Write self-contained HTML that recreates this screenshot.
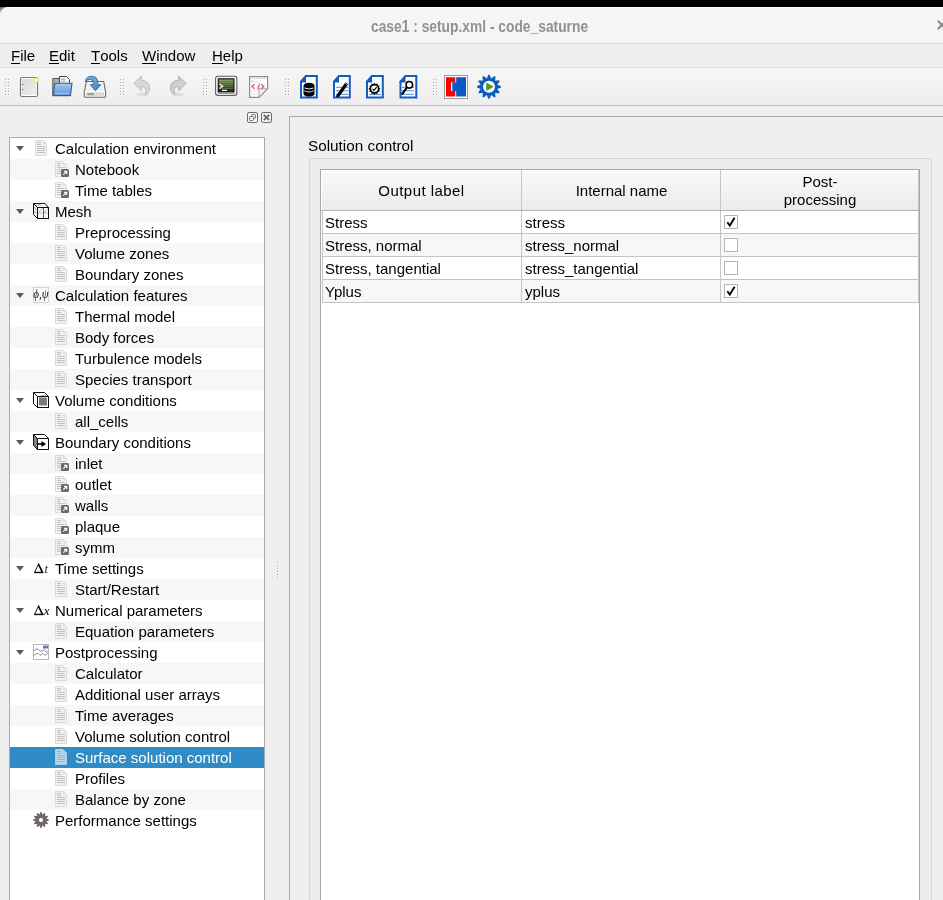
<!DOCTYPE html>
<html><head><meta charset="utf-8">
<style>
*{box-sizing:border-box}
html,body{margin:0;padding:0}
body{width:943px;height:900px;overflow:hidden;position:relative;will-change:transform;background:#efefef;font-family:"Liberation Sans",sans-serif;font-size:15px;color:#000}
.a{position:absolute}
svg{display:block}
#blackbar{left:0;top:0;width:943px;height:8px;background:#000}
#corner{left:0;top:7px;width:8px;height:9px;background:linear-gradient(170deg,#6a6a6a 0%,#a8a8a8 45%,#e0e0e0 100%)}
#title{left:0;top:7px;width:943px;height:37px;background:#f6f5f4;border-top:1px solid #fff;border-bottom:1px solid #d8d4d0;border-top-left-radius:8px}
#ttext{left:371px;top:16.5px;font-weight:bold;color:#8f9292;white-space:nowrap;font-size:15px;transform-origin:0 0;transform:scale(0.92,1.05)}
#menubar{left:0;top:44px;width:943px;height:24px;background:#eeeeee;border-bottom:1px solid #dcdcdc}
.mi{top:0;line-height:23px;white-space:nowrap}
.mi u{text-decoration:none;border-bottom:1px solid #000;display:inline-block;line-height:14px}
#toolbar{left:0;top:68px;width:943px;height:38px;background:linear-gradient(#f6f6f6,#eeeeee);border-bottom:1px solid #bcbcbc}
.dots{width:5px;height:18px;background-image:radial-gradient(circle at 1px 1px,#b5b5b5 0.8px,transparent 1px);background-size:3px 3px}
.vdots{width:3px;height:18px;background-image:radial-gradient(circle at 1px 1px,#a0a0a0 0.8px,transparent 1px);background-size:3px 3px}
#tree{left:9px;top:137px;width:256px;height:800px;background:#fff;border:1px solid #ababab;overflow:hidden}
.row{position:absolute;left:0;width:254px;height:21px;line-height:21px;white-space:nowrap}
.row.alt{background:#f7f7f7}
.row.sel{background:#308cc6;color:#fff}
.row .t{position:absolute;left:45px;top:0}
.row.c .t{left:65px}
.row .ic{position:absolute;left:23px;top:2px;width:16px;height:16px}
.row.c .ic{left:43px}
.arr{position:absolute;left:6px;top:8px;width:0;height:0;border-left:4px solid transparent;border-right:4px solid transparent;border-top:5px solid #5a5a5a}
#panel{left:289px;top:116px;width:700px;height:800px;border:1px solid #ababab;background:#efefef}
#group{left:309px;top:158px;width:623px;height:800px;border:1px solid #d6d6d6;border-radius:3px;background:#ececec}
#table{left:320px;top:169px;width:600px;height:800px;border:1px solid #a9a9a9;background:#fff}
.hdr{position:absolute;top:0;height:41px;background:linear-gradient(#fff 0,#fff 1px,#f9f9f9 1px,#ebebeb);box-shadow:inset 1px 0 0 #fff;border-bottom:1px solid #b2b2b2}
.hs{position:absolute;top:0;height:40px;border-right:1px solid #c4c4c4}
.ht{text-align:center;line-height:21px;white-space:nowrap}
.tr{position:absolute;left:2px;width:596px;height:23px;line-height:22px;white-space:nowrap}
.tr.alt{background:#f7f7f7}
.gl{background:#c4c4c4}
.cb{position:absolute;width:14px;height:14px;border:1px solid #b4b4b4;background:#fff}

</style></head>
<body>
<div id="blackbar" class="a"></div>
<div id="corner" class="a"></div>
<div id="title" class="a"></div>
<div id="ttext" class="a">case1 : setup.xml - code_saturne</div>
<svg class="a" style="left:936px;top:19px" width="10" height="12" viewBox="0 0 10 12"><path d="M2.5 2.5 L9 9.5 M9 2.5 L2.5 9.5" stroke="#8b8e8f" stroke-width="2.2" stroke-linecap="round"/></svg>
<div id="menubar" class="a">
<span class="a mi" style="left:11px"><u>F</u>ile</span>
<span class="a mi" style="left:49px"><u>E</u>dit</span>
<span class="a mi" style="left:91px"><u>T</u>ools</span>
<span class="a mi" style="left:142px"><u>W</u>indow</span>
<span class="a mi" style="left:212px"><u>H</u>elp</span>
</div>
<div id="toolbar" class="a"></div>
<svg class="a" style="left:0;top:0" width="520" height="105" viewBox="0 0 520 105" shape-rendering="crispEdges"><rect x="6" y="80" width="1" height="1" fill="#fdfdfd"/><rect x="5" y="79" width="1" height="1" fill="#a9a9a9"/><rect x="6" y="83" width="1" height="1" fill="#fdfdfd"/><rect x="5" y="82" width="1" height="1" fill="#a9a9a9"/><rect x="6" y="86" width="1" height="1" fill="#fdfdfd"/><rect x="5" y="85" width="1" height="1" fill="#a9a9a9"/><rect x="6" y="89" width="1" height="1" fill="#fdfdfd"/><rect x="5" y="88" width="1" height="1" fill="#a9a9a9"/><rect x="6" y="92" width="1" height="1" fill="#fdfdfd"/><rect x="5" y="91" width="1" height="1" fill="#a9a9a9"/><rect x="6" y="95" width="1" height="1" fill="#fdfdfd"/><rect x="5" y="94" width="1" height="1" fill="#a9a9a9"/><rect x="9" y="80" width="1" height="1" fill="#fdfdfd"/><rect x="8" y="79" width="1" height="1" fill="#a9a9a9"/><rect x="9" y="83" width="1" height="1" fill="#fdfdfd"/><rect x="8" y="82" width="1" height="1" fill="#a9a9a9"/><rect x="9" y="86" width="1" height="1" fill="#fdfdfd"/><rect x="8" y="85" width="1" height="1" fill="#a9a9a9"/><rect x="9" y="89" width="1" height="1" fill="#fdfdfd"/><rect x="8" y="88" width="1" height="1" fill="#a9a9a9"/><rect x="9" y="92" width="1" height="1" fill="#fdfdfd"/><rect x="8" y="91" width="1" height="1" fill="#a9a9a9"/><rect x="9" y="95" width="1" height="1" fill="#fdfdfd"/><rect x="8" y="94" width="1" height="1" fill="#a9a9a9"/><rect x="121" y="80" width="1" height="1" fill="#fdfdfd"/><rect x="120" y="79" width="1" height="1" fill="#a9a9a9"/><rect x="121" y="83" width="1" height="1" fill="#fdfdfd"/><rect x="120" y="82" width="1" height="1" fill="#a9a9a9"/><rect x="121" y="86" width="1" height="1" fill="#fdfdfd"/><rect x="120" y="85" width="1" height="1" fill="#a9a9a9"/><rect x="121" y="89" width="1" height="1" fill="#fdfdfd"/><rect x="120" y="88" width="1" height="1" fill="#a9a9a9"/><rect x="121" y="92" width="1" height="1" fill="#fdfdfd"/><rect x="120" y="91" width="1" height="1" fill="#a9a9a9"/><rect x="121" y="95" width="1" height="1" fill="#fdfdfd"/><rect x="120" y="94" width="1" height="1" fill="#a9a9a9"/><rect x="124" y="80" width="1" height="1" fill="#fdfdfd"/><rect x="123" y="79" width="1" height="1" fill="#a9a9a9"/><rect x="124" y="83" width="1" height="1" fill="#fdfdfd"/><rect x="123" y="82" width="1" height="1" fill="#a9a9a9"/><rect x="124" y="86" width="1" height="1" fill="#fdfdfd"/><rect x="123" y="85" width="1" height="1" fill="#a9a9a9"/><rect x="124" y="89" width="1" height="1" fill="#fdfdfd"/><rect x="123" y="88" width="1" height="1" fill="#a9a9a9"/><rect x="124" y="92" width="1" height="1" fill="#fdfdfd"/><rect x="123" y="91" width="1" height="1" fill="#a9a9a9"/><rect x="124" y="95" width="1" height="1" fill="#fdfdfd"/><rect x="123" y="94" width="1" height="1" fill="#a9a9a9"/><rect x="204" y="80" width="1" height="1" fill="#fdfdfd"/><rect x="203" y="79" width="1" height="1" fill="#a9a9a9"/><rect x="204" y="83" width="1" height="1" fill="#fdfdfd"/><rect x="203" y="82" width="1" height="1" fill="#a9a9a9"/><rect x="204" y="86" width="1" height="1" fill="#fdfdfd"/><rect x="203" y="85" width="1" height="1" fill="#a9a9a9"/><rect x="204" y="89" width="1" height="1" fill="#fdfdfd"/><rect x="203" y="88" width="1" height="1" fill="#a9a9a9"/><rect x="204" y="92" width="1" height="1" fill="#fdfdfd"/><rect x="203" y="91" width="1" height="1" fill="#a9a9a9"/><rect x="204" y="95" width="1" height="1" fill="#fdfdfd"/><rect x="203" y="94" width="1" height="1" fill="#a9a9a9"/><rect x="207" y="80" width="1" height="1" fill="#fdfdfd"/><rect x="206" y="79" width="1" height="1" fill="#a9a9a9"/><rect x="207" y="83" width="1" height="1" fill="#fdfdfd"/><rect x="206" y="82" width="1" height="1" fill="#a9a9a9"/><rect x="207" y="86" width="1" height="1" fill="#fdfdfd"/><rect x="206" y="85" width="1" height="1" fill="#a9a9a9"/><rect x="207" y="89" width="1" height="1" fill="#fdfdfd"/><rect x="206" y="88" width="1" height="1" fill="#a9a9a9"/><rect x="207" y="92" width="1" height="1" fill="#fdfdfd"/><rect x="206" y="91" width="1" height="1" fill="#a9a9a9"/><rect x="207" y="95" width="1" height="1" fill="#fdfdfd"/><rect x="206" y="94" width="1" height="1" fill="#a9a9a9"/><rect x="286" y="80" width="1" height="1" fill="#fdfdfd"/><rect x="285" y="79" width="1" height="1" fill="#a9a9a9"/><rect x="286" y="83" width="1" height="1" fill="#fdfdfd"/><rect x="285" y="82" width="1" height="1" fill="#a9a9a9"/><rect x="286" y="86" width="1" height="1" fill="#fdfdfd"/><rect x="285" y="85" width="1" height="1" fill="#a9a9a9"/><rect x="286" y="89" width="1" height="1" fill="#fdfdfd"/><rect x="285" y="88" width="1" height="1" fill="#a9a9a9"/><rect x="286" y="92" width="1" height="1" fill="#fdfdfd"/><rect x="285" y="91" width="1" height="1" fill="#a9a9a9"/><rect x="286" y="95" width="1" height="1" fill="#fdfdfd"/><rect x="285" y="94" width="1" height="1" fill="#a9a9a9"/><rect x="289" y="80" width="1" height="1" fill="#fdfdfd"/><rect x="288" y="79" width="1" height="1" fill="#a9a9a9"/><rect x="289" y="83" width="1" height="1" fill="#fdfdfd"/><rect x="288" y="82" width="1" height="1" fill="#a9a9a9"/><rect x="289" y="86" width="1" height="1" fill="#fdfdfd"/><rect x="288" y="85" width="1" height="1" fill="#a9a9a9"/><rect x="289" y="89" width="1" height="1" fill="#fdfdfd"/><rect x="288" y="88" width="1" height="1" fill="#a9a9a9"/><rect x="289" y="92" width="1" height="1" fill="#fdfdfd"/><rect x="288" y="91" width="1" height="1" fill="#a9a9a9"/><rect x="289" y="95" width="1" height="1" fill="#fdfdfd"/><rect x="288" y="94" width="1" height="1" fill="#a9a9a9"/><rect x="434" y="80" width="1" height="1" fill="#fdfdfd"/><rect x="433" y="79" width="1" height="1" fill="#a9a9a9"/><rect x="434" y="83" width="1" height="1" fill="#fdfdfd"/><rect x="433" y="82" width="1" height="1" fill="#a9a9a9"/><rect x="434" y="86" width="1" height="1" fill="#fdfdfd"/><rect x="433" y="85" width="1" height="1" fill="#a9a9a9"/><rect x="434" y="89" width="1" height="1" fill="#fdfdfd"/><rect x="433" y="88" width="1" height="1" fill="#a9a9a9"/><rect x="434" y="92" width="1" height="1" fill="#fdfdfd"/><rect x="433" y="91" width="1" height="1" fill="#a9a9a9"/><rect x="434" y="95" width="1" height="1" fill="#fdfdfd"/><rect x="433" y="94" width="1" height="1" fill="#a9a9a9"/><rect x="437" y="80" width="1" height="1" fill="#fdfdfd"/><rect x="436" y="79" width="1" height="1" fill="#a9a9a9"/><rect x="437" y="83" width="1" height="1" fill="#fdfdfd"/><rect x="436" y="82" width="1" height="1" fill="#a9a9a9"/><rect x="437" y="86" width="1" height="1" fill="#fdfdfd"/><rect x="436" y="85" width="1" height="1" fill="#a9a9a9"/><rect x="437" y="89" width="1" height="1" fill="#fdfdfd"/><rect x="436" y="88" width="1" height="1" fill="#a9a9a9"/><rect x="437" y="92" width="1" height="1" fill="#fdfdfd"/><rect x="436" y="91" width="1" height="1" fill="#a9a9a9"/><rect x="437" y="95" width="1" height="1" fill="#fdfdfd"/><rect x="436" y="94" width="1" height="1" fill="#a9a9a9"/></svg>
<svg class="a" style="left:0;top:68px" width="520" height="37" viewBox="0 68 520 37">
<defs>
<linearGradient id="gNew" x1="0" y1="0" x2="1" y2="1"><stop offset="0" stop-color="#d8d8d8"/><stop offset="1" stop-color="#efefef"/></linearGradient>
<linearGradient id="gFold" x1="0" y1="0" x2="0" y2="1"><stop offset="0" stop-color="#9cc0ea"/><stop offset="0.55" stop-color="#86ade0"/><stop offset="1" stop-color="#5f8fd0"/></linearGradient>
<linearGradient id="gArrow" x1="0" y1="0" x2="1" y2="1"><stop offset="0" stop-color="#80b4e4"/><stop offset="1" stop-color="#3f86c8"/></linearGradient>
<linearGradient id="gTerm" x1="0" y1="0" x2="0" y2="1"><stop offset="0" stop-color="#f2f2f2"/><stop offset="1" stop-color="#bdbdbd"/></linearGradient>
<linearGradient id="gScr" x1="0" y1="0" x2="0" y2="1"><stop offset="0" stop-color="#7d9a5a"/><stop offset="0.5" stop-color="#3f5a2a"/><stop offset="1" stop-color="#1a2612"/></linearGradient>
<radialGradient id="gShadow" cx="0.5" cy="0.5" r="0.5"><stop offset="0" stop-color="#000" stop-opacity="0.12"/><stop offset="1" stop-color="#000" stop-opacity="0"/></radialGradient>
</defs>
<!-- new -->
<rect x="20.5" y="77.5" width="17" height="19" rx="1.5" fill="#fff" stroke="#777a76" stroke-width="1.2"/>
<rect x="22" y="79" width="14" height="16" fill="url(#gNew)"/>
<circle cx="22.5" cy="84.5" r="0.7" fill="#666"/><circle cx="22.5" cy="89.5" r="0.7" fill="#666"/>
<circle cx="36" cy="80.2" r="2.1" fill="#fbfbff" stroke="#f0e46a" stroke-width="1.4"/>
<!-- open -->
<path d="M52.8 78.5 H59.5 V95.5 H52.8 Z" fill="#b0b0b0" stroke="#555" stroke-width="1"/>
<path d="M59.5 76.5 H66.5 L69.5 79.5 V86 H59.5 Z" fill="#f6f6f6" stroke="#444" stroke-width="1"/>
<path d="M61 79.3 H65 M61 81.3 H65" stroke="#999" stroke-width="0.9"/>
<path d="M54.8 83.3 H72 L70.4 95.6 H53 Z" fill="url(#gFold)" stroke="#2f5fa8" stroke-width="1.1"/>
<path d="M56.5 85 H70 M55.5 93.5 H69" stroke="#c6dcf4" stroke-width="0.8" opacity="0.8"/>
<!-- save -->
<path d="M86.4 81.5 H103.7 L105.6 92 V96.6 Q105.6 97.3 104.8 97.3 H85.1 Q84.3 97.3 84.3 96.6 V92 Z" fill="#f3f3f3" stroke="#6b6b6b" stroke-width="1.1"/>
<path d="M84.8 91.8 H105.1" stroke="#fff" stroke-width="1"/>
<rect x="86.2" y="92.5" width="17.6" height="3.2" fill="#cfcfcf"/>
<rect x="87.5" y="93" width="6" height="2.2" fill="#8a8a8a" opacity="0.7"/>
<path d="M95.5 93 V95.3 M97.5 93 V95.3 M99.5 93 V95.3 M101.5 93 V95.3" stroke="#f4f4f4" stroke-width="0.7"/><path d="M86 89.2 H104" stroke="#d8d8d8" stroke-width="0.6" stroke-dasharray="1 1"/>
<path d="M85.3 81.6 Q86.2 76.4 91.2 76.3 Q97.2 76.3 97.8 81.5 V84.7 H100.9 L95.4 90.8 L90.2 84.7 H93.2 V82.2 Q92.8 79.3 90.2 79.3 Q87.4 79.4 85.3 81.6 Z" fill="url(#gArrow)" stroke="#1e5c9a" stroke-width="0.8"/>
<!-- undo -->
<ellipse cx="142" cy="94.5" rx="8" ry="2.5" fill="url(#gShadow)"/>
<path d="M133.9 83.4 L141.4 76.2 V80.4 Q149.6 80.6 149.6 88 Q149.6 92.8 144.9 95 Q146.3 92 146 89.5 Q145.5 86.3 141.4 86.3 V90.7 Z" fill="#d9d9d9" stroke="#bcbcbc" stroke-width="1"/>
<!-- redo -->
<ellipse cx="178" cy="94.5" rx="8" ry="2.5" fill="url(#gShadow)"/>
<path d="M186.1 83.4 L178.6 76.2 V80.4 Q170.4 80.6 170.4 88 Q170.4 92.8 175.1 95 Q173.7 92 174 89.5 Q174.5 86.3 178.6 86.3 V90.7 Z" fill="#cfcfcf" stroke="#b2b2b2" stroke-width="1"/>
<!-- terminal -->
<rect x="215.6" y="76.3" width="21.2" height="19.2" rx="2.2" fill="url(#gTerm)" stroke="#5e5f5c" stroke-width="1.1"/>
<rect x="216.8" y="77.5" width="18.8" height="16.8" rx="1.5" fill="none" stroke="#fafafa" stroke-width="0.8"/>
<rect x="218.3" y="78.8" width="15.6" height="13" fill="url(#gScr)" stroke="#0a0a0a" stroke-width="1"/>
<path d="M219 80.5 H233 M219 82.5 H233 M219 84.5 H233 M219 86.5 H233 M219 88.5 H233" stroke="#a7c08a" stroke-width="0.6" opacity="0.55"/>
<path d="M219.5 84 L222.8 86.3 L219.5 88.6" fill="none" stroke="#f4f4f4" stroke-width="1.2"/>
<rect x="222" y="89.8" width="5" height="1.2" fill="#fff"/>
<path d="M218 93.5 H234" stroke="#8c8c8c" stroke-width="0.8"/>
<circle cx="229.5" cy="93.5" r="0.8" fill="#8ee04a"/>
<!-- xml -->
<path d="M249.6 76.6 H267.6 V88.8 L259 97.4 H249.6 Z" fill="#fdfdfd" stroke="#8d8d8d" stroke-width="1.2"/>
<path d="M259 88.8 H267 L259 97 Z" fill="#f4f4f4" stroke="#9a9a9a" stroke-width="0.9"/>
<path d="M251 78.5 H266 M251 80.5 H254 M251 82 H258" stroke="#c8c8c8" stroke-width="0.5"/>
<path d="M254.6 84.2 L251.9 86.5 L254.6 88.8 M257.6 89.5 L259.6 83.8 M261.2 84.2 L263.9 86.5 L261.2 88.8" fill="none" stroke="#e94a8f" stroke-width="1.2"/>
<path d="M251 91 H257 M251 94 H257" stroke="#d2d2d2" stroke-width="0.6"/>
<!-- blue docs -->
<g fill="#fff" stroke="#135cbf" stroke-width="2">
<path d="M306 76 H316.8 V97.6 H301 V81.6 Z"/>
<path d="M339 76 H349.8 V97.6 H334 V81.6 Z"/>
<path d="M372 76 H382.8 V97.6 H367 V81.6 Z"/>
<path d="M405.5 76 H416.3 V97.6 H400.5 V81.6 Z"/>
</g>
<g fill="#135cbf">
<path d="M300 81.6 L306 75 V82.6 H300 Z"/>
<path d="M333 81.6 L339 75 V82.6 H333 Z"/>
<path d="M366 81.6 L372 75 V82.6 H366 Z"/>
<path d="M399.5 81.6 L405.5 75 V82.6 H399.5 Z"/>
</g>
<!-- database -->
<path d="M303.5 85.8 Q304 82.8 309 82.8 Q314 82.8 314.5 85.8 V93.8 Q314 96.6 309 96.6 Q304 96.6 303.5 93.8 Z" fill="#000"/>
<path d="M304.5 88 Q309 90 313.5 88 M304.5 91 Q309 93 313.5 91" fill="none" stroke="#e8eef8" stroke-width="1"/>
<path d="M304.5 91.2 Q309 92.6 313.5 91.2" fill="none" stroke="#5b8fd6" stroke-width="0.6"/>
<!-- pencil doc -->
<path d="M336 87.3 H348 M336 90.8 H348 M336 94.3 H348" stroke="#3f7bd0" stroke-width="0.9"/>
<path d="M336.5 95 L345.5 82.3 L348.2 84.2 L339.2 96.8 L336 97.2 Z" fill="#000"/>
<path d="M345 83.2 L347.8 85.2" stroke="#fff" stroke-width="0.6"/>
<!-- gear check doc -->
<path d="M369 94.6 H381" stroke="#3f7bd0" stroke-width="0.9"/>
<g transform="translate(374.5 88.8)">
<path d="M0 -6 L1.2 -4.6 L3 -5.2 L3.3 -3.3 L5.2 -3 L4.6 -1.2 L6 0 L4.6 1.2 L5.2 3 L3.3 3.3 L3 5.2 L1.2 4.6 L0 6 L-1.2 4.6 L-3 5.2 L-3.3 3.3 L-5.2 3 L-4.6 1.2 L-6 0 L-4.6 -1.2 L-5.2 -3 L-3.3 -3.3 L-3 -5.2 L-1.2 -4.6 Z" fill="#000"/>
<circle r="3.3" fill="#fff"/>
<path d="M-2 0 L-0.5 1.6 L2.2 -1.6" fill="none" stroke="#000" stroke-width="1.1"/>
</g>
<!-- magnifier doc -->
<path d="M402 87.3 H414 M402 90.8 H414 M402 94.3 H414" stroke="#3f7bd0" stroke-width="0.9"/>
<circle cx="409.3" cy="84.8" r="3.3" fill="#fff" stroke="#000" stroke-width="1.6"/>
<path d="M406.8 87.6 L402.3 93.8" stroke="#000" stroke-width="2.2" stroke-linecap="round"/>
<!-- red/blue -->
<rect x="444.5" y="75.5" width="23" height="23" fill="#fff" stroke="#9a9a9a" stroke-width="1"/>
<path d="M446 77.2 H455.3 V82.3 H451 V91 H455.3 V96.5 H446 Z" fill="#f00"/>
<path d="M456.2 77.2 H466 V96.5 H456.2 V91 H452.3 V82.3 H456.2 Z" fill="#0b57c4"/>
<!-- gear play -->
<g transform="translate(489 86.8)">
<path fill="#0b5cbf" d="M-2.23 -8.31 L-0.60 -11.99 L0.60 -11.99 L2.23 -8.31 L5.47 -10.68 L6.51 -10.08 L6.08 -6.08 L10.08 -6.51 L10.68 -5.47 L8.31 -2.23 L11.99 -0.60 L11.99 0.60 L8.31 2.23 L10.68 5.47 L10.08 6.51 L6.08 6.08 L6.51 10.08 L5.47 10.68 L2.23 8.31 L0.60 11.99 L-0.60 11.99 L-2.23 8.31 L-5.47 10.68 L-6.51 10.08 L-6.08 6.08 L-10.08 6.51 L-10.68 5.47 L-8.31 2.23 L-11.99 0.60 L-11.99 -0.60 L-8.31 -2.23 L-10.68 -5.47 L-10.08 -6.51 L-6.08 -6.08 L-6.51 -10.08 L-5.47 -10.68 Z"/><circle r="6" fill="#fff"/><path d="M-2.8 -4.3 L4.9 0 L-2.8 4.3 Z" fill="#4a9a2a"/>
</g>
</svg>

<svg class="a" style="left:244px;top:109px" width="32" height="17" viewBox="244 109 32 17">
<rect x="247.5" y="112.5" width="10" height="10" rx="1.6" fill="#f6f6f6" stroke="#6c6964" stroke-width="1"/>
<rect x="251.5" y="114.5" width="4" height="4" rx="1" fill="none" stroke="#6c6964" stroke-width="1"/>
<rect x="249.5" y="116.5" width="4" height="4" rx="1" fill="#f6f6f6" stroke="#6c6964" stroke-width="1"/>
<rect x="261.5" y="112.5" width="10" height="10" rx="1.6" fill="#f6f6f6" stroke="#6c6964" stroke-width="1"/>
<path d="M263.8 114.8 L269.2 120.2 M269.2 114.8 L263.8 120.2" stroke="#6c6964" stroke-width="1.8"/>
</svg>

<div id="tree" class="a">
<div class="row" style="top:0px"><div class="arr"></div><div class="ic"><svg width="16" height="16" viewBox="0 0 16 16"><path d="M2.5 0.5 H10 L13.5 4 V15.5 H2.5 Z" fill="#f3f2f0" stroke="#dcdad6"/><path d="M10 0.5 V4 H13.5 Z" fill="#dedbd6"/><path d="M4 2.5 H8 M4 4.5 H8 M4 6.5 H12 M4 8.5 H12 M4 10.5 H12 M4 12.5 H12" stroke="#c3c1bd" stroke-width="1"/></svg>
</div><span class="t">Calculation environment</span></div>
<div class="row c alt" style="top:21px"><div class="ic"><svg width="16" height="16" viewBox="0 0 16 16"><path d="M2.5 0.5 H10 L13.5 4 V15.5 H2.5 Z" fill="#f3f2f0" stroke="#dcdad6"/><path d="M10 0.5 V4 H13.5 Z" fill="#dedbd6"/><path d="M4 2.5 H8 M4 4.5 H8 M4 6.5 H12 M4 8.5 H12 M4 10.5 H12 M4 12.5 H12" stroke="#c3c1bd" stroke-width="1"/><rect x="8" y="8" width="8" height="8" rx="1.5" fill="#69696e"/><path d="M10.3 13.7 L13.6 10.4 M11 10.3 H13.7 V13" fill="none" stroke="#fff" stroke-width="1.2"/></svg>
</div><span class="t">Notebook</span></div>
<div class="row c" style="top:42px"><div class="ic"><svg width="16" height="16" viewBox="0 0 16 16"><path d="M2.5 0.5 H10 L13.5 4 V15.5 H2.5 Z" fill="#f3f2f0" stroke="#dcdad6"/><path d="M10 0.5 V4 H13.5 Z" fill="#dedbd6"/><path d="M4 2.5 H8 M4 4.5 H8 M4 6.5 H12 M4 8.5 H12 M4 10.5 H12 M4 12.5 H12" stroke="#c3c1bd" stroke-width="1"/><rect x="8" y="8" width="8" height="8" rx="1.5" fill="#69696e"/><path d="M10.3 13.7 L13.6 10.4 M11 10.3 H13.7 V13" fill="none" stroke="#fff" stroke-width="1.2"/></svg>
</div><span class="t">Time tables</span></div>
<div class="row alt" style="top:63px"><div class="arr"></div><div class="ic"><svg width="16" height="16" viewBox="0 0 16 16"><path d="M1 1.5 L4 3.5 M5 0.5 L8 3 M3 2 L6 2" stroke="#888" stroke-width="0.7"/><path d="M1.5 4 L3 7 M1.5 8 L3 10" stroke="#777" stroke-width="0.7"/><path d="M4.5 10.5 L10 5 M10.5 10.5 L15.5 5" stroke="#666" stroke-width="0.7" stroke-dasharray="1.2 0.8"/><path d="M4.5 10 H15.5" stroke="#bbb" stroke-width="0.8"/><path d="M0.5 0.5 L4.5 4.5 M0.5 0.5 H12 L15.5 4.5 M0.5 0.5 V11.5 L4.5 15.5" fill="none" stroke="#111" stroke-width="1"/><rect x="4.5" y="4.5" width="11" height="11" fill="none" stroke="#111" stroke-width="1"/><path d="M10.5 4.5 V15.5" stroke="#333" stroke-width="0.8"/></svg>
</div><span class="t">Mesh</span></div>
<div class="row c" style="top:84px"><div class="ic"><svg width="16" height="16" viewBox="0 0 16 16"><path d="M2.5 0.5 H10 L13.5 4 V15.5 H2.5 Z" fill="#f3f2f0" stroke="#dcdad6"/><path d="M10 0.5 V4 H13.5 Z" fill="#dedbd6"/><path d="M4 2.5 H8 M4 4.5 H8 M4 6.5 H12 M4 8.5 H12 M4 10.5 H12 M4 12.5 H12" stroke="#c3c1bd" stroke-width="1"/></svg>
</div><span class="t">Preprocessing</span></div>
<div class="row c alt" style="top:105px"><div class="ic"><svg width="16" height="16" viewBox="0 0 16 16"><path d="M2.5 0.5 H10 L13.5 4 V15.5 H2.5 Z" fill="#f3f2f0" stroke="#dcdad6"/><path d="M10 0.5 V4 H13.5 Z" fill="#dedbd6"/><path d="M4 2.5 H8 M4 4.5 H8 M4 6.5 H12 M4 8.5 H12 M4 10.5 H12 M4 12.5 H12" stroke="#c3c1bd" stroke-width="1"/></svg>
</div><span class="t">Volume zones</span></div>
<div class="row c" style="top:126px"><div class="ic"><svg width="16" height="16" viewBox="0 0 16 16"><path d="M2.5 0.5 H10 L13.5 4 V15.5 H2.5 Z" fill="#f3f2f0" stroke="#dcdad6"/><path d="M10 0.5 V4 H13.5 Z" fill="#dedbd6"/><path d="M4 2.5 H8 M4 4.5 H8 M4 6.5 H12 M4 8.5 H12 M4 10.5 H12 M4 12.5 H12" stroke="#c3c1bd" stroke-width="1"/></svg>
</div><span class="t">Boundary zones</span></div>
<div class="row alt" style="top:147px"><div class="arr"></div><div class="ic"><svg width="16" height="16" viewBox="0 0 16 16"><rect x="0.5" y="0.5" width="15" height="15" fill="#fafafa" stroke="#d4d4d4"/><text x="0.3" y="11" font-family="Liberation Serif" font-style="italic" font-size="13" fill="#111" textLength="15.4" lengthAdjust="spacingAndGlyphs">ϕ,ψ</text></svg>
</div><span class="t">Calculation features</span></div>
<div class="row c" style="top:168px"><div class="ic"><svg width="16" height="16" viewBox="0 0 16 16"><path d="M2.5 0.5 H10 L13.5 4 V15.5 H2.5 Z" fill="#f3f2f0" stroke="#dcdad6"/><path d="M10 0.5 V4 H13.5 Z" fill="#dedbd6"/><path d="M4 2.5 H8 M4 4.5 H8 M4 6.5 H12 M4 8.5 H12 M4 10.5 H12 M4 12.5 H12" stroke="#c3c1bd" stroke-width="1"/></svg>
</div><span class="t">Thermal model</span></div>
<div class="row c alt" style="top:189px"><div class="ic"><svg width="16" height="16" viewBox="0 0 16 16"><path d="M2.5 0.5 H10 L13.5 4 V15.5 H2.5 Z" fill="#f3f2f0" stroke="#dcdad6"/><path d="M10 0.5 V4 H13.5 Z" fill="#dedbd6"/><path d="M4 2.5 H8 M4 4.5 H8 M4 6.5 H12 M4 8.5 H12 M4 10.5 H12 M4 12.5 H12" stroke="#c3c1bd" stroke-width="1"/></svg>
</div><span class="t">Body forces</span></div>
<div class="row c" style="top:210px"><div class="ic"><svg width="16" height="16" viewBox="0 0 16 16"><path d="M2.5 0.5 H10 L13.5 4 V15.5 H2.5 Z" fill="#f3f2f0" stroke="#dcdad6"/><path d="M10 0.5 V4 H13.5 Z" fill="#dedbd6"/><path d="M4 2.5 H8 M4 4.5 H8 M4 6.5 H12 M4 8.5 H12 M4 10.5 H12 M4 12.5 H12" stroke="#c3c1bd" stroke-width="1"/></svg>
</div><span class="t">Turbulence models</span></div>
<div class="row c alt" style="top:231px"><div class="ic"><svg width="16" height="16" viewBox="0 0 16 16"><path d="M2.5 0.5 H10 L13.5 4 V15.5 H2.5 Z" fill="#f3f2f0" stroke="#dcdad6"/><path d="M10 0.5 V4 H13.5 Z" fill="#dedbd6"/><path d="M4 2.5 H8 M4 4.5 H8 M4 6.5 H12 M4 8.5 H12 M4 10.5 H12 M4 12.5 H12" stroke="#c3c1bd" stroke-width="1"/></svg>
</div><span class="t">Species transport</span></div>
<div class="row" style="top:252px"><div class="arr"></div><div class="ic"><svg width="16" height="16" viewBox="0 0 16 16"><rect x="6" y="5.5" width="8" height="8" fill="#7a7a7a"/><path d="M6 5.5 L8 3.5 H14" fill="none" stroke="#aaa" stroke-width="0.8"/><path d="M0.5 0.5 L4.5 4.5 M0.5 0.5 H11.5 L15.5 4.5 M0.5 0.5 V11.5 L4.5 15.5" fill="none" stroke="#111" stroke-width="1"/><rect x="4.5" y="4.5" width="11" height="11" fill="none" stroke="#111" stroke-width="1"/></svg>
</div><span class="t">Volume conditions</span></div>
<div class="row c alt" style="top:273px"><div class="ic"><svg width="16" height="16" viewBox="0 0 16 16"><path d="M2.5 0.5 H10 L13.5 4 V15.5 H2.5 Z" fill="#f3f2f0" stroke="#dcdad6"/><path d="M10 0.5 V4 H13.5 Z" fill="#dedbd6"/><path d="M4 2.5 H8 M4 4.5 H8 M4 6.5 H12 M4 8.5 H12 M4 10.5 H12 M4 12.5 H12" stroke="#c3c1bd" stroke-width="1"/></svg>
</div><span class="t">all_cells</span></div>
<div class="row" style="top:294px"><div class="arr"></div><div class="ic"><svg width="16" height="16" viewBox="0 0 16 16"><path d="M0.5 0.5 L4.5 4.5 V15.5 L0.5 11.5 Z" fill="#808080"/><path d="M0.5 0.5 L4.5 4.5 M0.5 0.5 H11.5 L15.5 4.5 M0.5 0.5 V11.5 L4.5 15.5" fill="none" stroke="#111" stroke-width="1"/><rect x="4.5" y="4.5" width="11" height="11" fill="#fff" stroke="#111" stroke-width="1"/><path d="M5 10 H9" stroke="#000" stroke-width="1.6"/><path d="M8.5 7 L13 10 L8.5 13 Z" fill="#000"/></svg>
</div><span class="t">Boundary conditions</span></div>
<div class="row c alt" style="top:315px"><div class="ic"><svg width="16" height="16" viewBox="0 0 16 16"><path d="M2.5 0.5 H10 L13.5 4 V15.5 H2.5 Z" fill="#f3f2f0" stroke="#dcdad6"/><path d="M10 0.5 V4 H13.5 Z" fill="#dedbd6"/><path d="M4 2.5 H8 M4 4.5 H8 M4 6.5 H12 M4 8.5 H12 M4 10.5 H12 M4 12.5 H12" stroke="#c3c1bd" stroke-width="1"/><rect x="8" y="8" width="8" height="8" rx="1.5" fill="#69696e"/><path d="M10.3 13.7 L13.6 10.4 M11 10.3 H13.7 V13" fill="none" stroke="#fff" stroke-width="1.2"/></svg>
</div><span class="t">inlet</span></div>
<div class="row c" style="top:336px"><div class="ic"><svg width="16" height="16" viewBox="0 0 16 16"><path d="M2.5 0.5 H10 L13.5 4 V15.5 H2.5 Z" fill="#f3f2f0" stroke="#dcdad6"/><path d="M10 0.5 V4 H13.5 Z" fill="#dedbd6"/><path d="M4 2.5 H8 M4 4.5 H8 M4 6.5 H12 M4 8.5 H12 M4 10.5 H12 M4 12.5 H12" stroke="#c3c1bd" stroke-width="1"/><rect x="8" y="8" width="8" height="8" rx="1.5" fill="#69696e"/><path d="M10.3 13.7 L13.6 10.4 M11 10.3 H13.7 V13" fill="none" stroke="#fff" stroke-width="1.2"/></svg>
</div><span class="t">outlet</span></div>
<div class="row c alt" style="top:357px"><div class="ic"><svg width="16" height="16" viewBox="0 0 16 16"><path d="M2.5 0.5 H10 L13.5 4 V15.5 H2.5 Z" fill="#f3f2f0" stroke="#dcdad6"/><path d="M10 0.5 V4 H13.5 Z" fill="#dedbd6"/><path d="M4 2.5 H8 M4 4.5 H8 M4 6.5 H12 M4 8.5 H12 M4 10.5 H12 M4 12.5 H12" stroke="#c3c1bd" stroke-width="1"/><rect x="8" y="8" width="8" height="8" rx="1.5" fill="#69696e"/><path d="M10.3 13.7 L13.6 10.4 M11 10.3 H13.7 V13" fill="none" stroke="#fff" stroke-width="1.2"/></svg>
</div><span class="t">walls</span></div>
<div class="row c" style="top:378px"><div class="ic"><svg width="16" height="16" viewBox="0 0 16 16"><path d="M2.5 0.5 H10 L13.5 4 V15.5 H2.5 Z" fill="#f3f2f0" stroke="#dcdad6"/><path d="M10 0.5 V4 H13.5 Z" fill="#dedbd6"/><path d="M4 2.5 H8 M4 4.5 H8 M4 6.5 H12 M4 8.5 H12 M4 10.5 H12 M4 12.5 H12" stroke="#c3c1bd" stroke-width="1"/><rect x="8" y="8" width="8" height="8" rx="1.5" fill="#69696e"/><path d="M10.3 13.7 L13.6 10.4 M11 10.3 H13.7 V13" fill="none" stroke="#fff" stroke-width="1.2"/></svg>
</div><span class="t">plaque</span></div>
<div class="row c alt" style="top:399px"><div class="ic"><svg width="16" height="16" viewBox="0 0 16 16"><path d="M2.5 0.5 H10 L13.5 4 V15.5 H2.5 Z" fill="#f3f2f0" stroke="#dcdad6"/><path d="M10 0.5 V4 H13.5 Z" fill="#dedbd6"/><path d="M4 2.5 H8 M4 4.5 H8 M4 6.5 H12 M4 8.5 H12 M4 10.5 H12 M4 12.5 H12" stroke="#c3c1bd" stroke-width="1"/><rect x="8" y="8" width="8" height="8" rx="1.5" fill="#69696e"/><path d="M10.3 13.7 L13.6 10.4 M11 10.3 H13.7 V13" fill="none" stroke="#fff" stroke-width="1.2"/></svg>
</div><span class="t">symm</span></div>
<div class="row" style="top:420px"><div class="arr"></div><div class="ic"><svg width="20" height="16" viewBox="0 0 20 16"><g transform="translate(0 1.6)"><path d="M5.6 1.2 L1 11.2 H10.6 Z M5.2 4 L8.3 10.2 H2.4 Z" fill="#000" fill-rule="evenodd"/><path d="M1.2 11.1 H10.4" stroke="#000" stroke-width="0.9"/><text x="11.6" y="11" font-family="Liberation Serif" font-style="italic" font-size="12.5" fill="#222">t</text></g></svg>
</div><span class="t">Time settings</span></div>
<div class="row c alt" style="top:441px"><div class="ic"><svg width="16" height="16" viewBox="0 0 16 16"><path d="M2.5 0.5 H10 L13.5 4 V15.5 H2.5 Z" fill="#f3f2f0" stroke="#dcdad6"/><path d="M10 0.5 V4 H13.5 Z" fill="#dedbd6"/><path d="M4 2.5 H8 M4 4.5 H8 M4 6.5 H12 M4 8.5 H12 M4 10.5 H12 M4 12.5 H12" stroke="#c3c1bd" stroke-width="1"/></svg>
</div><span class="t">Start/Restart</span></div>
<div class="row" style="top:462px"><div class="arr"></div><div class="ic"><svg width="20" height="16" viewBox="0 0 20 16"><g transform="translate(0 1.6)"><path d="M5.6 1.2 L1 11.2 H10.6 Z M5.2 4 L8.3 10.2 H2.4 Z" fill="#000" fill-rule="evenodd"/><path d="M1.2 11.1 H10.4" stroke="#000" stroke-width="0.9"/><text x="10.8" y="11" font-family="Liberation Serif" font-style="italic" font-size="13" fill="#000">x</text></g></svg>
</div><span class="t">Numerical parameters</span></div>
<div class="row c alt" style="top:483px"><div class="ic"><svg width="16" height="16" viewBox="0 0 16 16"><path d="M2.5 0.5 H10 L13.5 4 V15.5 H2.5 Z" fill="#f3f2f0" stroke="#dcdad6"/><path d="M10 0.5 V4 H13.5 Z" fill="#dedbd6"/><path d="M4 2.5 H8 M4 4.5 H8 M4 6.5 H12 M4 8.5 H12 M4 10.5 H12 M4 12.5 H12" stroke="#c3c1bd" stroke-width="1"/></svg>
</div><span class="t">Equation parameters</span></div>
<div class="row" style="top:504px"><div class="arr"></div><div class="ic"><svg width="16" height="16" viewBox="0 0 16 16"><rect x="0.5" y="0.5" width="15" height="15" fill="#fff" stroke="#b8b8b8"/><rect x="10" y="1.5" width="5" height="3" fill="#6b7b6b"/><rect x="10.5" y="2" width="4" height="1" fill="#8a80c8"/><path d="M0.5 7.5 Q2 4.5 4 5 Q6 5 6.5 6.5 Q7.5 8 10 6.5 Q11 5 12 6.5 Q13 9 14 8 L15.5 7" fill="none" stroke="#8a80e0" stroke-width="1"/><path d="M0.5 12 Q2 10 4 9.5 Q6 9 7 11 Q8 12 9 10 Q10 8.5 11 10.5 Q12 12 13.5 10.5 L15 9" fill="none" stroke="#7fa07f" stroke-width="1"/></svg>
</div><span class="t">Postprocessing</span></div>
<div class="row c alt" style="top:525px"><div class="ic"><svg width="16" height="16" viewBox="0 0 16 16"><path d="M2.5 0.5 H10 L13.5 4 V15.5 H2.5 Z" fill="#f3f2f0" stroke="#dcdad6"/><path d="M10 0.5 V4 H13.5 Z" fill="#dedbd6"/><path d="M4 2.5 H8 M4 4.5 H8 M4 6.5 H12 M4 8.5 H12 M4 10.5 H12 M4 12.5 H12" stroke="#c3c1bd" stroke-width="1"/></svg>
</div><span class="t">Calculator</span></div>
<div class="row c" style="top:546px"><div class="ic"><svg width="16" height="16" viewBox="0 0 16 16"><path d="M2.5 0.5 H10 L13.5 4 V15.5 H2.5 Z" fill="#f3f2f0" stroke="#dcdad6"/><path d="M10 0.5 V4 H13.5 Z" fill="#dedbd6"/><path d="M4 2.5 H8 M4 4.5 H8 M4 6.5 H12 M4 8.5 H12 M4 10.5 H12 M4 12.5 H12" stroke="#c3c1bd" stroke-width="1"/></svg>
</div><span class="t">Additional user arrays</span></div>
<div class="row c alt" style="top:567px"><div class="ic"><svg width="16" height="16" viewBox="0 0 16 16"><path d="M2.5 0.5 H10 L13.5 4 V15.5 H2.5 Z" fill="#f3f2f0" stroke="#dcdad6"/><path d="M10 0.5 V4 H13.5 Z" fill="#dedbd6"/><path d="M4 2.5 H8 M4 4.5 H8 M4 6.5 H12 M4 8.5 H12 M4 10.5 H12 M4 12.5 H12" stroke="#c3c1bd" stroke-width="1"/></svg>
</div><span class="t">Time averages</span></div>
<div class="row c" style="top:588px"><div class="ic"><svg width="16" height="16" viewBox="0 0 16 16"><path d="M2.5 0.5 H10 L13.5 4 V15.5 H2.5 Z" fill="#f3f2f0" stroke="#dcdad6"/><path d="M10 0.5 V4 H13.5 Z" fill="#dedbd6"/><path d="M4 2.5 H8 M4 4.5 H8 M4 6.5 H12 M4 8.5 H12 M4 10.5 H12 M4 12.5 H12" stroke="#c3c1bd" stroke-width="1"/></svg>
</div><span class="t">Volume solution control</span></div>
<div class="row c alt sel" style="top:609px"><div class="ic"><svg width="16" height="16" viewBox="0 0 16 16"><path d="M2.5 0.5 H10 L13.5 4 V15.5 H2.5 Z" fill="#b9d5ea" stroke="#a9cbe6"/><path d="M10 0.5 V4 H13.5 Z" fill="#a7c9e4"/><path d="M4 2.5 H8 M4 4.5 H8 M4 6.5 H12 M4 8.5 H12 M4 10.5 H12 M4 12.5 H12" stroke="#8fb8da" stroke-width="1"/></svg>
</div><span class="t">Surface solution control</span></div>
<div class="row c" style="top:630px"><div class="ic"><svg width="16" height="16" viewBox="0 0 16 16"><path d="M2.5 0.5 H10 L13.5 4 V15.5 H2.5 Z" fill="#f3f2f0" stroke="#dcdad6"/><path d="M10 0.5 V4 H13.5 Z" fill="#dedbd6"/><path d="M4 2.5 H8 M4 4.5 H8 M4 6.5 H12 M4 8.5 H12 M4 10.5 H12 M4 12.5 H12" stroke="#c3c1bd" stroke-width="1"/></svg>
</div><span class="t">Profiles</span></div>
<div class="row c alt" style="top:651px"><div class="ic"><svg width="16" height="16" viewBox="0 0 16 16"><path d="M2.5 0.5 H10 L13.5 4 V15.5 H2.5 Z" fill="#f3f2f0" stroke="#dcdad6"/><path d="M10 0.5 V4 H13.5 Z" fill="#dedbd6"/><path d="M4 2.5 H8 M4 4.5 H8 M4 6.5 H12 M4 8.5 H12 M4 10.5 H12 M4 12.5 H12" stroke="#c3c1bd" stroke-width="1"/></svg>
</div><span class="t">Balance by zone</span></div>
<div class="row" style="top:672px"><div class="ic"><svg width="16" height="16" viewBox="0 0 16 16"><path d="M6.55 2.59 L7.53 0.11 L8.47 0.11 L9.45 2.59 L11.53 0.93 L12.35 1.41 L11.96 4.04 L14.59 3.65 L15.07 4.47 L13.41 6.55 L15.89 7.53 L15.89 8.47 L13.41 9.45 L15.07 11.53 L14.59 12.35 L11.96 11.96 L12.35 14.59 L11.53 15.07 L9.45 13.41 L8.47 15.89 L7.53 15.89 L6.55 13.41 L4.47 15.07 L3.65 14.59 L4.04 11.96 L1.41 12.35 L0.93 11.53 L2.59 9.45 L0.11 8.47 L0.11 7.53 L2.59 6.55 L0.93 4.47 L1.41 3.65 L4.04 4.04 L3.65 1.41 L4.47 0.93 Z M10.1 8 A2.1 2.1 0 1 0 5.9 8 A2.1 2.1 0 1 0 10.1 8 Z" fill="#6f6969" fill-rule="evenodd"/></svg>
</div><span class="t">Performance settings</span></div>
</div>
<svg class="a" style="left:270px;top:555px" width="20" height="30" viewBox="270 555 20 30" shape-rendering="crispEdges"><rect x="278" y="563" width="1" height="1" fill="#fafafa"/><rect x="277" y="562" width="1" height="1" fill="#a8a8a8"/><rect x="278" y="566" width="1" height="1" fill="#fafafa"/><rect x="277" y="565" width="1" height="1" fill="#a8a8a8"/><rect x="278" y="569" width="1" height="1" fill="#fafafa"/><rect x="277" y="568" width="1" height="1" fill="#a8a8a8"/><rect x="278" y="572" width="1" height="1" fill="#fafafa"/><rect x="277" y="571" width="1" height="1" fill="#a8a8a8"/><rect x="278" y="575" width="1" height="1" fill="#fafafa"/><rect x="277" y="574" width="1" height="1" fill="#a8a8a8"/><rect x="278" y="578" width="1" height="1" fill="#fafafa"/><rect x="277" y="577" width="1" height="1" fill="#a8a8a8"/></svg>
<div id="panel" class="a"></div>
<div class="a" style="left:308px;top:135px;line-height:21px;white-space:nowrap;font-size:15.3px">Solution control</div>
<div id="group" class="a"></div>
<div id="table" class="a">
<div class="hdr" style="left:0;width:598px"></div>
<div class="hs" style="left:0px;width:201px"></div>
<div class="hs" style="left:201px;width:199px"></div>
<div class="hs" style="left:400px;width:198px"></div>
<div class="a ht" style="left:0;width:201px;top:10px;letter-spacing:0.45px">Output label</div>
<div class="a ht" style="left:201px;width:199px;top:10px">Internal name</div>
<div class="a ht" style="left:400px;width:198px;top:3px;line-height:18px">Post-<br>processing</div>
<div class="a" style="left:1px;top:41px;width:1px;height:92px;background:#c4c4c4"></div>
<div class="tr" style="top:41px"><span class="a" style="left:2px;top:1px">Stress</span><span class="a" style="left:202px;top:1px">stress</span></div>
<div class="a gl" style="left:2px;top:63px;width:596px;height:1px"></div>
<div class="cb" style="left:403px;top:45px"><svg width="12" height="12" viewBox="0 0 12 12" style="position:absolute;left:0;top:0"><path d="M2.3 6.2 L4.8 9.6 L9.6 1.8" fill="none" stroke="#000" stroke-width="1.9" stroke-linejoin="miter"/></svg></div>
<div class="tr alt" style="top:64px"><span class="a" style="left:2px;top:1px">Stress, normal</span><span class="a" style="left:202px;top:1px">stress_normal</span></div>
<div class="a gl" style="left:2px;top:86px;width:596px;height:1px"></div>
<div class="cb" style="left:403px;top:68px"></div>
<div class="tr" style="top:87px"><span class="a" style="left:2px;top:1px">Stress, tangential</span><span class="a" style="left:202px;top:1px">stress_tangential</span></div>
<div class="a gl" style="left:2px;top:109px;width:596px;height:1px"></div>
<div class="cb" style="left:403px;top:91px"></div>
<div class="tr alt" style="top:110px"><span class="a" style="left:2px;top:1px">Yplus</span><span class="a" style="left:202px;top:1px">yplus</span></div>
<div class="a gl" style="left:2px;top:132px;width:596px;height:1px"></div>
<div class="cb" style="left:403px;top:114px"><svg width="12" height="12" viewBox="0 0 12 12" style="position:absolute;left:0;top:0"><path d="M2.3 6.2 L4.8 9.6 L9.6 1.8" fill="none" stroke="#000" stroke-width="1.9" stroke-linejoin="miter"/></svg></div>
<div class="a gl" style="left:200px;top:41px;width:1px;height:92px"></div>
<div class="a gl" style="left:399px;top:41px;width:1px;height:92px"></div>
<div class="a gl" style="left:597px;top:41px;width:1px;height:92px"></div>
</div>
</body></html>
